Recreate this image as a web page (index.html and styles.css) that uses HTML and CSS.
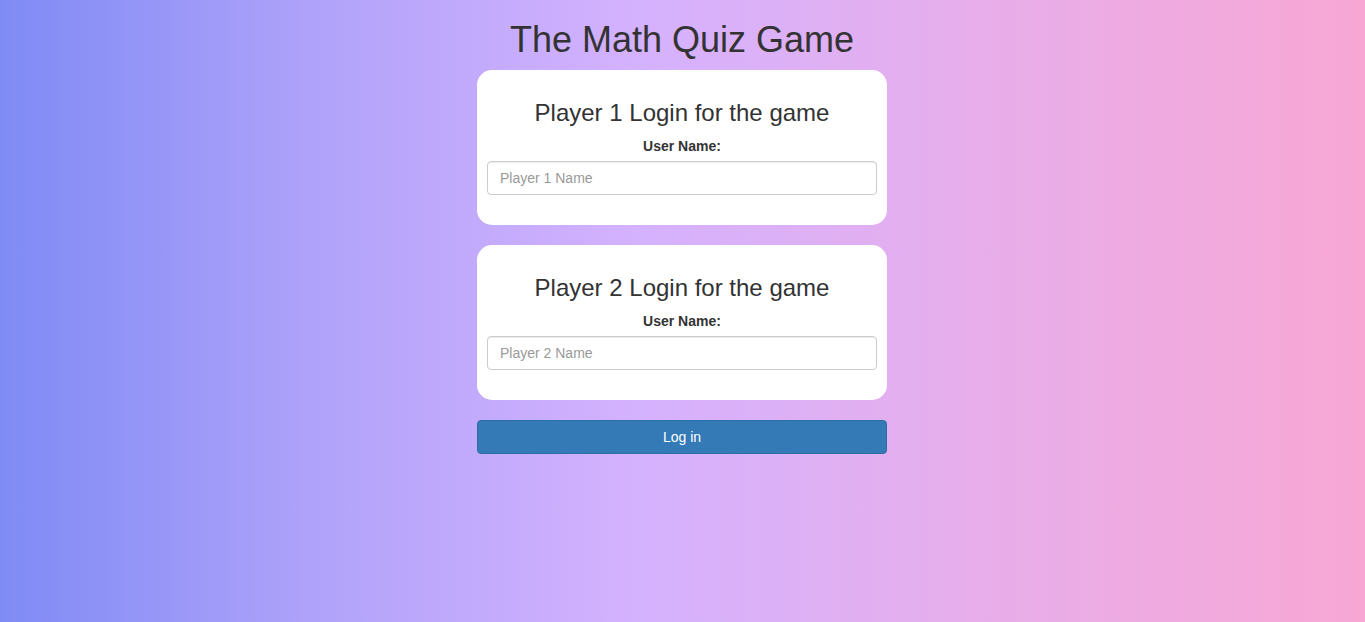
FILE: index.html
```html
<!DOCTYPE html>
<html lang="en">
<head>
<meta charset="utf-8">
<title>The Math Quiz Game</title>
<link rel="stylesheet" href="styles.css">
</head>
<body>
<div class="page">
  <h1 class="title">The Math Quiz Game</h1>
  <form class="login">
    <div class="card">
      <h3 class="card-title">Player 1 Login for the game</h3>
      <div class="form-group">
        <label class="label" for="p1">User Name:</label>
        <input class="input" id="p1" type="text" placeholder="Player 1 Name">
      </div>
    </div>
    <div class="card">
      <h3 class="card-title">Player 2 Login for the game</h3>
      <div class="form-group">
        <label class="label" for="p2">User Name:</label>
        <input class="input" id="p2" type="text" placeholder="Player 2 Name">
      </div>
    </div>
    <button class="btn" type="button">Log in</button>
  </form>
</div>
</body>
</html>
```
FILE: styles.css
```css
* { box-sizing: border-box; }
html { height: 100%; }
body {
  margin: 0;
  min-height: 100%;
  font-family: "Liberation Sans", Arial, Helvetica, sans-serif;
  font-size: 14px;
  line-height: 1.42857;
  color: #333;
  background: linear-gradient(to right, #7f8bf5 0%, #b3a4fa 25%, #d5b2fe 47%, #e6aeec 70%, #f8a7d4 100%);
}
.page {
  display: flex;
  flex-direction: column;
  align-items: center;
  padding-right: 1px;
}
.title {
  margin: 20px 0 10px;
  font-size: 36px;
  font-weight: 500;
  line-height: 1.1;
  color: #333;
}
.login {
  width: 410px;
  display: flex;
  flex-direction: column;
}
.card {
  background: #fff;
  border-radius: 15px;
  padding: 10px 10px 15px;
  margin-bottom: 20px;
  text-align: center;
}
.card-title {
  margin: 20px 0 10px;
  font-size: 24px;
  font-weight: 500;
  line-height: 1.1;
}
.form-group {
  margin-bottom: 15px;
}
.label {
  display: inline-block;
  margin-bottom: 5px;
  padding-top: 1px;
  line-height: 19px;
  font-weight: bold;
}
.input {
  display: block;
  width: 100%;
  height: 34px;
  padding: 6px 12px;
  font-family: inherit;
  font-size: 14px;
  line-height: 1.42857;
  color: #555;
  background: #fff;
  border: 1px solid #ccc;
  border-radius: 4px;
  box-shadow: inset 0 1px 1px rgba(0,0,0,.075);
  text-align: left;
}
.input::placeholder { color: #999; }
.btn {
  width: 100%;
  height: 34px;
  padding: 7px 12px 5px;
  font-family: inherit;
  font-size: 14px;
  line-height: 1.42857;
  color: #fff;
  background: #337ab7;
  border: 1px solid #2e6da4;
  border-radius: 4px;
  cursor: pointer;
}
```
